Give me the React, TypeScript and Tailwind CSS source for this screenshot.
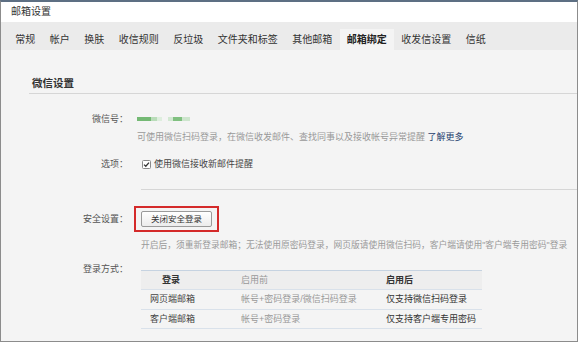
import React from "react";

const tabs = ["常规", "帐户", "换肤", "收信规则", "反垃圾", "文件夹和标签", "其他邮箱", "邮箱绑定", "收发信设置", "信纸"];

const rows = [
  { name: "网页端邮箱", before: "帐号+密码登录/微信扫码登录", after: "仅支持微信扫码登录" },
  { name: "客户端邮箱", before: "帐号+密码登录", after: "仅支持客户端专用密码" },
];

function CheckBox() {
  return (
    <svg width="9" height="9" viewBox="0 0 9 9" className="shrink-0">
      <rect x="0.5" y="0.5" width="8" height="8" rx="1" fill="#fff" stroke="#8a8a8a" />
      <path d="M2 4.6L3.8 6.3L7 2.6" fill="none" stroke="#333" strokeWidth="1.3" />
    </svg>
  );
}

export default function App() {
  return (
    <div className="w-[580px] h-[343px] bg-white font-['Liberation_Sans','Noto_Sans_CJK_SC',sans-serif] text-[#333]">
      <div className="w-[578px] h-[342px] border-t-2 border-t-[#5d6f83] border-x border-b border-x-[#8c8c8c] border-b-[#8c8c8c] flex flex-col">
        <div className="h-[20px] bg-white pl-[10px] flex items-center text-[10px] leading-[14px]">邮箱设置</div>

        <div className="h-[28px] bg-[#ebebeb] flex items-end pl-[7px]">
          {tabs.map((t) => (
            <div
              key={t}
              className={`h-[21px] px-[7.25px] flex items-center text-[10px] leading-[14px] ${t === "邮箱绑定" ? "bg-[#f4f4f4] font-bold text-[#222]" : "text-[#333]"}`}
            >
              {t}
            </div>
          ))}
        </div>

        <div className="flex-1 bg-[#f4f4f4] flex flex-col text-[9px] leading-[14px]">
          <div className="pl-[31px] pt-[26px] text-[10.5px] leading-[14px] font-bold text-[#333]">微信设置</div>
          <div className="ml-[28px] mt-[3px] border-t border-[#d6d6d6]" />

          <div className="flex mt-[18px]">
            <div className="w-[127px] text-right text-[#555]">微信号：</div>
            <div className="pl-[9px] flex items-center gap-[6px]">
              <div className="flex items-center blur-[0.6px]">
                <span className="w-[14px] h-[4px] bg-[#74b974]" />
                <span className="w-[6px] h-[4px] bg-[#b9dcb9]" />
                <span className="w-[5px] h-[4px] bg-[#deeede]" />
              </div>
              <div className="flex items-center blur-[0.6px]">
                <span className="w-[5px] h-[4px] bg-[#d2e8d2]" />
                <span className="w-[9px] h-[4px] bg-[#80c080]" />
                <span className="w-[8px] h-[4px] bg-[#cde5cd]" />
              </div>
            </div>
          </div>
          <div className="pl-[136px] mt-[4px] text-[#999] whitespace-nowrap">
            可使用微信扫码登录，在微信收发邮件、查找同事以及接收帐号异常提醒 <span className="text-[#1e3f6e]">了解更多</span>
          </div>

          <div className="flex mt-[13px]">
            <div className="w-[127px] text-right text-[#555]">选项：</div>
            <div className="pl-[14px] flex items-center gap-[3px] text-[#444]">
              <CheckBox />
              <span>使用微信接收新邮件提醒</span>
            </div>
          </div>

          <div className="ml-[140px] mt-[18px] border-t border-[#d6d6d6]" />

          <div className="flex items-center mt-[16px]">
            <div className="w-[127px] text-right text-[#555]">安全设置：</div>
            <div className="ml-[6px] border-2 border-[#d42a2a] px-[5px] py-[3px]">
              <button className="w-[71px] h-[16px] rounded-[2px] border border-[#9a9a9a] bg-gradient-to-b from-white to-[#ececec] text-[8.5px] leading-[14px] text-[#333]">
                关闭安全登录
              </button>
            </div>
          </div>
          <div className="pl-[140px] mt-[6px] text-[8.75px] text-[#999] whitespace-nowrap">
            开启后，须重新登录邮箱；无法使用原密码登录，网页版请使用微信扫码，客户端请使用"客户端专用密码"登录
          </div>

          <div className="flex items-start mt-[10px]">
            <div className="w-[127px] text-right text-[#555]">登录方式：</div>
            <div className="ml-[13px] mt-[8px] w-[341px] border-t border-[#c6d3e1]">
              <div className="grid grid-cols-[100px_145px_96px] h-[19px] items-center bg-[#eeeeee] border-b border-[#d9e1ea]">
                <div className="pl-[21px] font-bold text-[#333]">登录</div>
                <div className="text-[#999]">启用前</div>
                <div className="font-bold text-[#333]">启用后</div>
              </div>
              {rows.map((r) => (
                <div key={r.name} className="grid grid-cols-[100px_145px_96px] h-[19.5px] items-center border-b border-[#d9e1ea]">
                  <div className="pl-[9px] text-[#444]">{r.name}</div>
                  <div className="text-[#999]">{r.before}</div>
                  <div className="text-[#333]">{r.after}</div>
                </div>
              ))}
            </div>
          </div>
        </div>
      </div>
    </div>
  );
}
